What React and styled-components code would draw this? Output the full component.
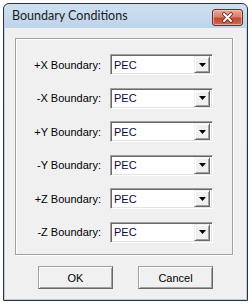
import React from "react";
import styled, { createGlobalStyle } from "styled-components";

const Global = createGlobalStyle`
  html, body { margin: 0; padding: 0; background: #ffffff; }
  body { font-family: "Liberation Sans", Arial, sans-serif; }
`;

const Screen = styled.div`
  width: 252px;
  height: 306px;
  padding: 3px 0 0 3px;
  box-sizing: border-box;
`;

const Window = styled.div`
  width: 245px;
  height: 298px;
  box-sizing: border-box;
  border: 1px solid #2e3338;
  border-radius: 6px 6px 0 0;
  background: linear-gradient(#cfe0f1, #bcd3eb 26px, #b4cfe9);
  padding: 0 1px 1px 1px;
  display: flex;
  flex-direction: column;
`;

const TitleBar = styled.div`
  height: 24px;
  flex: none;
  display: flex;
  align-items: center;
  justify-content: space-between;
  padding: 0 3px 0 7px;
`;

const Title = styled.span`
  font-family: Lato, "Open Sans", sans-serif;
  font-size: 12.5px;
  color: #1c1c1c;
  margin-top: -1px;
`;

const CloseButton = styled.div`
  width: 29px;
  height: 15px;
  margin-top: 2px;
  border: 1px solid #6b2b22;
  border-radius: 3px;
  background: linear-gradient(#e9a99c, #d8806d 45%, #c24a33 55%, #cf6a4f);
  box-shadow: inset 0 0 0 1px rgba(255, 210, 200, 0.6);
  display: flex;
  align-items: center;
  justify-content: center;
`;

const Client = styled.div`
  flex: 1;
  background: #f0f0f0;
  padding: 10px 13px 0 10px;
  display: flex;
  flex-direction: column;
`;

const GroupBox = styled.div`
  width: 218px;
  height: 217px;
  box-sizing: border-box;
  border: 1px solid #a0a0a0;
  box-shadow: inset 1px 1px #ffffff, 1px 1px #ffffff;
  display: grid;
  grid-template-columns: 85px 103px;
  column-gap: 9px;
  grid-auto-rows: 21px;
  row-gap: 12.6px;
  padding-top: 15px;
`;

const Label = styled.label`
  font-size: 11px;
  color: #000;
  text-align: right;
  align-self: center;
  white-space: nowrap;
`;

const Combo = styled.div`
  box-sizing: border-box;
  height: 21px;
  border: 1px solid;
  border-color: #a0a0a0 #ffffff #ffffff #a0a0a0;
  box-shadow: inset 1px 1px #696969, inset -1px -1px #e3e3e3;
  background: #ffffff;
  display: flex;
  align-items: center;
  padding: 2px;
`;

const ComboText = styled.span`
  flex: 1;
  font-size: 11px;
  color: #0a0a40;
  padding-left: 1px;
`;

const DropButton = styled.div`
  width: 16px;
  height: 17px;
  box-sizing: border-box;
  background: #f0f0f0;
  border: 1px solid;
  border-color: #f0f0f0 #696969 #696969 #f0f0f0;
  box-shadow: inset 1px 1px #ffffff, inset -1px -1px #a0a0a0;
  display: flex;
  align-items: center;
  justify-content: center;
`;

const ButtonRow = styled.div`
  display: flex;
  gap: 25px;
  padding-left: 23px;
  margin-top: 11px;
`;

const Button = styled.button`
  width: 75px;
  height: 23px;
  box-sizing: border-box;
  background: #f0f0f0;
  border: 1px solid;
  border-color: #a0a0a0 #696969 #696969 #a0a0a0;
  box-shadow: inset 1px 1px #ffffff, inset -1px -1px #a0a0a0;
  font-family: "Liberation Sans", Arial, sans-serif;
  font-size: 11px;
  color: #000;
  padding: 0;
`;

const Arrow = () => (
  <svg width="7" height="4" viewBox="0 0 7 4">
    <path d="M0 0H7L3.5 4Z" fill="#000" />
  </svg>
);

const CloseX = () => (
  <svg width="13" height="11" viewBox="0 0 13 11">
    <path
      d="M3 2 L10 9 M10 2 L3 9"
      stroke="#5a2a22"
      strokeWidth="3.6"
      strokeLinecap="round"
      fill="none"
    />
    <path
      d="M3 2 L10 9 M10 2 L3 9"
      stroke="#ffffff"
      strokeWidth="2"
      strokeLinecap="round"
      fill="none"
    />
  </svg>
);

const rows = ["+X", "-X", "+Y", "-Y", "+Z", "-Z"];

export default function App() {
  return (
    <Screen>
      <Global />
      <Window>
        <TitleBar>
          <Title>Boundary Conditions</Title>
          <CloseButton>
            <CloseX />
          </CloseButton>
        </TitleBar>
        <Client>
          <GroupBox>
            {rows.map((r) => (
              <React.Fragment key={r}>
                <Label>{r} Boundary:</Label>
                <Combo>
                  <ComboText>PEC</ComboText>
                  <DropButton>
                    <Arrow />
                  </DropButton>
                </Combo>
              </React.Fragment>
            ))}
          </GroupBox>
          <ButtonRow>
            <Button>OK</Button>
            <Button>Cancel</Button>
          </ButtonRow>
        </Client>
      </Window>
    </Screen>
  );
}
